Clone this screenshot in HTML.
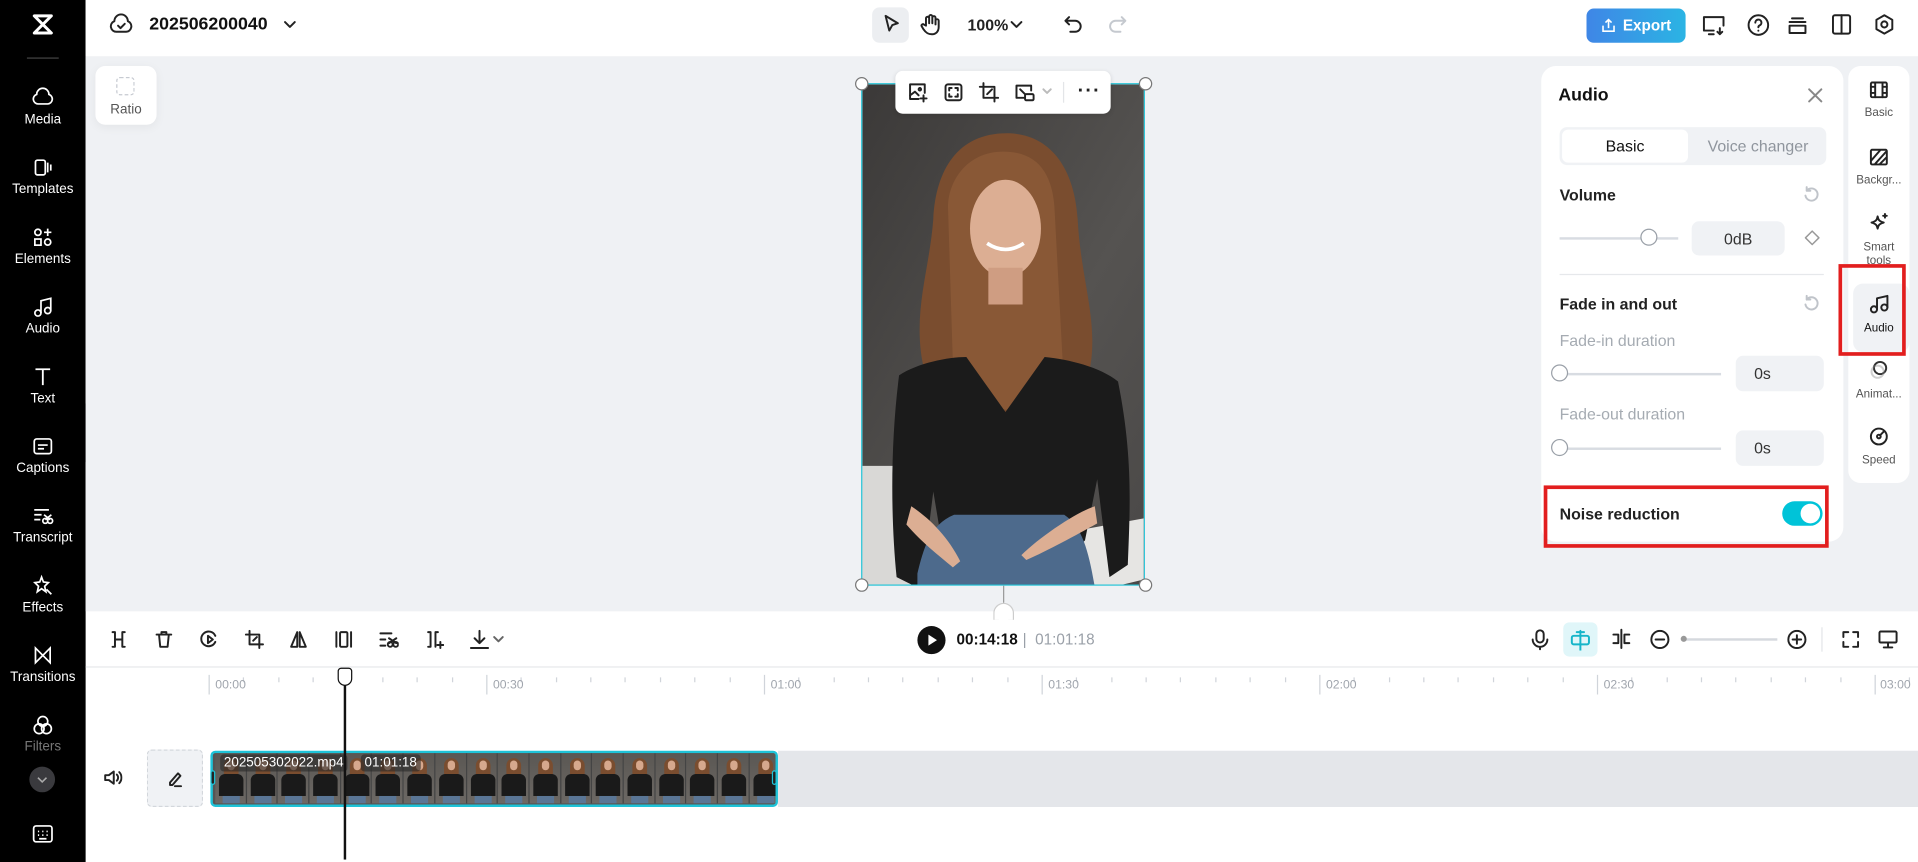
<!DOCTYPE html>
<html><head><meta charset="utf-8">
<style>
*{box-sizing:border-box;margin:0;padding:0}
html,body{width:1918px;height:862px;overflow:hidden;background:#fff;font-family:"Liberation Sans",sans-serif}
#s{position:absolute;left:0;top:0;width:1568px;height:705px;transform:scale(1.22321,1.2227);transform-origin:0 0;background:#fff}
.a{position:absolute}
.sb{left:0;top:0;width:70px;height:705px;background:#000}
.si{position:absolute;left:0;width:70px;text-align:center;color:#fff;font-size:11px}
.si svg{display:block;margin:0 auto 3px}
.top{left:70px;top:0;width:1498px;height:46px;background:#fff}
.canvas{left:70px;top:46px;width:1498px;height:454px;background:#eff1f4}
.ic{position:absolute;stroke:#222;fill:none;stroke-width:1.6;stroke-linecap:round;stroke-linejoin:round}
.lbl{font-size:13px;color:#222;font-weight:bold}
.gray{color:#9aa0a8}
.inp{position:absolute;background:#f0f2f5;border-radius:6px;font-size:13px;color:#333;display:flex;align-items:center;justify-content:center}
.sl{position:absolute;height:2px;background:#d8dce2}
.kn{position:absolute;width:14px;height:14px;border-radius:50%;background:#fff;border:1px solid #9aa0a8}
.rt{position:absolute;left:0;width:50px;text-align:center;font-size:9.5px;color:#555}
.rt svg{display:block;margin:0 auto 6px}
.rl{position:absolute;top:555px;font-size:10px;color:#a0a5ad}
.th{width:25.7px;height:41px;flex:none;position:relative;overflow:hidden;background:linear-gradient(#5a5753,#6c6864);border-right:1px solid #444}
</style></head><body>
<div id="s">
<!-- sidebar -->
<div class="a sb">
 <svg class="a" style="left:25px;top:10px" width="20" height="20" viewBox="0 0 20 20"><path d="M3 3h14L10 10 17 17H3L10 10Z" fill="none" stroke="#fff" stroke-width="2.4" stroke-linejoin="round"/></svg>
 <div class="a" style="left:22px;top:47px;width:26px;height:1px;background:#444"></div>
 <div class="si" style="top:71px"><svg width="18" height="18" viewBox="0 0 18 18"><path d="M5 14a4 4 0 0 1-1-7.8 5 5 0 0 1 10 0A4 4 0 0 1 13 14Z" fill="none" stroke="#fff" stroke-width="1.4"/></svg>Media</div>
 <div class="si" style="top:128px"><svg width="18" height="18" viewBox="0 0 18 18"><rect x="3" y="3" width="8" height="12" rx="1.5" fill="none" stroke="#fff" stroke-width="1.4"/><path d="M13 5v8M15.5 6.5v5" stroke="#fff" stroke-width="1.4"/></svg>Templates</div>
 <div class="si" style="top:185px"><svg width="18" height="18" viewBox="0 0 18 18" fill="none" stroke="#fff" stroke-width="1.4"><circle cx="5" cy="5" r="2.5"/><path d="M13 2v6M10 5h6"/><rect x="2.5" y="10.5" width="5" height="5"/><circle cx="13" cy="13" r="2.5"/></svg>Elements</div>
 <div class="si" style="top:242px"><svg width="18" height="18" viewBox="0 0 18 18" fill="none" stroke="#fff" stroke-width="1.4"><circle cx="5" cy="14" r="2.5"/><circle cx="13" cy="12" r="2.5"/><path d="M7.5 14V4l8-2v10"/></svg>Audio</div>
 <div class="si" style="top:299px"><svg width="18" height="18" viewBox="0 0 18 18" fill="none" stroke="#fff" stroke-width="1.5"><path d="M3 3h12M9 3v13"/></svg>Text</div>
 <div class="si" style="top:356px"><svg width="18" height="18" viewBox="0 0 18 18" fill="none" stroke="#fff" stroke-width="1.4"><rect x="2" y="3" width="14" height="12" rx="2"/><path d="M5 8h8M5 11h5"/></svg>Captions</div>
 <div class="si" style="top:413px"><svg width="18" height="18" viewBox="0 0 18 18" fill="none" stroke="#fff" stroke-width="1.4"><path d="M2 4h12M2 8h6M2 12h5"/><circle cx="11" cy="13" r="2"/><circle cx="15" cy="13" r="2"/><path d="M10 8l5 4M16 8l-5 4"/></svg>Transcript</div>
 <div class="si" style="top:470px"><svg width="18" height="18" viewBox="0 0 18 18" fill="none" stroke="#fff" stroke-width="1.4"><path d="M8 2l1.5 4 4 .5-3 3 1 4.5L8 11.5 4.5 14l1-4.5-3-3 4-.5Z"/><path d="M12 12l4 4"/></svg>Effects</div>
 <div class="si" style="top:527px"><svg width="18" height="18" viewBox="0 0 18 18" fill="none" stroke="#fff" stroke-width="1.4"><path d="M3 3v12l12-12v12Z"/></svg>Transitions</div>
 <div class="si" style="top:584px;color:#777"><svg width="18" height="18" viewBox="0 0 18 18" fill="none" stroke="#fff" stroke-width="1.4"><circle cx="9" cy="6" r="4"/><circle cx="6" cy="12" r="4"/><circle cx="12" cy="12" r="4"/></svg>Filters</div>
 <div class="a" style="left:24px;top:627px;width:21px;height:21px;border-radius:50%;background:#3a3a3e"><svg class="a" style="left:6px;top:7px" width="9" height="7" viewBox="0 0 9 7"><path d="M1 2l3.5 3.5L8 2" fill="none" stroke="#aaa" stroke-width="1.3"/></svg></div>
 <svg class="a" style="left:26px;top:674px" width="18" height="16" viewBox="0 0 18 16" fill="none" stroke="#fff" stroke-width="1.4"><rect x="1.5" y="1.5" width="15" height="13" rx="2"/><path d="M5 6h1M8.5 6h1M12 6h1M5 9h1M8.5 9h1M12 9h1M6 12h6"/></svg>
</div>
<div class="a" style="left:70px;top:330px;width:6px;height:48px;background:#2a2a2e;border-radius:0 6px 6px 0"></div>
<!-- top bar -->
<div class="a top"></div>
<svg class="ic" style="left:89px;top:11px" width="20" height="18" viewBox="0 0 20 18"><path d="M6 15a4.5 4.5 0 0 1-1.5-8.7 5.5 5.5 0 0 1 11 0A4.5 4.5 0 0 1 14 15Z"/><path d="M7.5 10l2 2 3.5-3.5"/></svg>
<div class="a" style="left:122px;top:12px;font-size:14.5px;font-weight:bold;color:#111">202506200040</div>
<svg class="ic" style="left:232px;top:16px" width="10" height="8" viewBox="0 0 10 8"><path d="M1 2l4 4 4-4"/></svg>
<div class="a" style="left:713px;top:6px;width:30px;height:29px;background:#eceef1;border-radius:6px"></div>
<svg class="ic" style="left:720px;top:11px" width="18" height="18" viewBox="0 0 18 18"><path d="M4 2l10 6-4.5 1.5L7 14Z"/></svg>
<svg class="ic" style="left:752px;top:10px" width="18" height="20" viewBox="0 0 18 20"><path d="M5 11V5a1.3 1.3 0 0 1 2.6 0v4V3.5a1.3 1.3 0 0 1 2.6 0V9V4.5a1.3 1.3 0 0 1 2.6 0V10V7a1.3 1.3 0 0 1 2.6 0v5c0 4-2.5 6-5.5 6S5 17 3 14l-1.5-2.5a1.2 1.2 0 0 1 2-1.3Z"/></svg>
<div class="a" style="left:791px;top:13px;font-size:13px;color:#222;font-weight:bold">100%</div>
<svg class="ic" style="left:826px;top:16px" width="10" height="8" viewBox="0 0 10 8"><path d="M1 2l4 4 4-4"/></svg>
<svg class="ic" style="left:869px;top:12px" width="17" height="16" viewBox="0 0 17 16"><path d="M5 2L2 5l3 3M2 5h8a4.5 4.5 0 0 1 0 9H6"/></svg>
<svg class="ic" style="left:905px;top:12px;stroke:#c5c9cf" width="17" height="16" viewBox="0 0 17 16"><path d="M12 2l3 3-3 3M15 5H7a4.5 4.5 0 0 0 0 9h4"/></svg>
<div class="a" style="left:1297px;top:7px;width:81px;height:28px;border-radius:6px;background:linear-gradient(90deg,#3f86e6,#2bb4e4);color:#fff;font-size:12.5px;font-weight:bold;display:flex;align-items:center;justify-content:center;gap:6px"><svg width="12" height="12" viewBox="0 0 12 12" fill="none" stroke="#fff" stroke-width="1.3"><path d="M6 8V1M3.5 3.5L6 1l2.5 2.5M1.5 6v4.5h9V6"/></svg>Export</div>
<svg class="ic" style="left:1391px;top:11px" width="20" height="19" viewBox="0 0 20 19"><path d="M10 14H2V3h16v7M6 17h4"/><path d="M15 12v5M13 15l2 2 2-2"/></svg>
<svg class="ic" style="left:1428px;top:11px" width="19" height="19" viewBox="0 0 19 19"><circle cx="9.5" cy="9.5" r="8"/><path d="M7 7.5a2.5 2.5 0 1 1 3.5 2.3c-.7.3-1 .8-1 1.5M9.5 14v.1"/></svg>
<svg class="ic" style="left:1461px;top:12px" width="17" height="17" viewBox="0 0 17 17"><path d="M4 3h9M2 6h13M2 9h13v6H2Z"/></svg>
<svg class="ic" style="left:1497px;top:11px" width="17" height="18" viewBox="0 0 17 18"><rect x="1.5" y="1.5" width="14" height="15" rx="1.5"/><path d="M8.5 1.5v15"/></svg>
<svg class="ic" style="left:1532px;top:11px" width="17" height="18" viewBox="0 0 17 18"><path d="M8.5 1.5l6.5 3.7v7.6L8.5 16.5 2 12.8V5.2Z"/><circle cx="8.5" cy="9" r="2.5"/></svg>
<!-- canvas -->
<div class="a canvas"></div>
<div class="a" style="left:78px;top:54px;width:50px;height:48px;background:#fff;border-radius:8px;box-shadow:0 2px 8px rgba(0,0,0,.05)"><div class="a" style="left:17px;top:9px;width:15px;height:15px;border:1.5px dashed #c6cad1;border-radius:3px"></div><div class="a" style="left:0;top:30px;width:50px;text-align:center;font-size:11px;color:#555">Ratio</div></div>
<!-- video -->
<div class="a" style="left:704px;top:68px;width:232px;height:411px;border:1.5px solid #22c3d6;overflow:hidden">
<svg width="232" height="411" viewBox="0 0 232 411" style="display:block">
<defs><linearGradient id="bg" x1="0" y1="0" x2="1" y2="1"><stop offset="0" stop-color="#3b3938"/><stop offset=".6" stop-color="#555351"/><stop offset="1" stop-color="#4a4847"/></linearGradient></defs>
<rect width="232" height="411" fill="url(#bg)"/>
<path d="M0 312h40v99H0Z" fill="#d9d8d6"/><path d="M175 365l55-10v50l-25 6h-30Z" fill="#e6e5e3"/>
<path d="M118 40c-40 0-58 30-60 70-3 40-15 70-10 110 5 40 30 50 40 60h70c15-20 30-30 30-70 0-30-10-60-12-100-3-45-25-70-58-70Z" fill="#7a4d2f"/>
<path d="M70 100c0-20 15-45 45-45s40 20 42 45l8 150-20 20-70-10Z" fill="#93603c" opacity=".6"/>
<ellipse cx="117" cy="118" rx="29" ry="40" fill="#dcae93"/>
<path d="M103 150h28v30h-28Z" fill="#cf9d82"/>
<path d="M30 238c15-10 40-15 55-15l32 45 32-45c20 2 45 8 60 20 12 60 10 100 8 150l-15 10-10-80-10 50-20 20H68l-10-60-10 80-20-10c-5-50-5-110 2-165Z" fill="#1b1b1b"/>
<path d="M45 400c5-20 10-40 30-48h90c15 10 20 30 25 59H45Z" fill="#4d6a8c"/>
<path d="M40 345c15 10 30 25 40 45l-6 5c-12-10-25-20-38-35Z" fill="#dcae93"/>
<path d="M190 345c-15 5-45 25-60 40l4 4c18-8 40-20 58-30Z" fill="#dcae93"/>
<path d="M102 130q15 10 30 0" stroke="#fff" stroke-width="3" fill="none"/>
</svg></div>
<div class="a" style="left:699px;top:63px;width:11px;height:11px;border-radius:50%;background:#fff;border:1px solid #777"></div>
<div class="a" style="left:931px;top:63px;width:11px;height:11px;border-radius:50%;background:#fff;border:1px solid #777"></div>
<div class="a" style="left:699px;top:473px;width:11px;height:11px;border-radius:50%;background:#fff;border:1px solid #777"></div>
<div class="a" style="left:931px;top:473px;width:11px;height:11px;border-radius:50%;background:#fff;border:1px solid #777"></div>
<div class="a" style="left:820px;top:479px;width:1px;height:14px;background:#999"></div>
<div class="a" style="left:812px;top:493px;width:17px;height:14px;border-radius:9px 9px 0 0;background:#fff;border:1px solid #ccc;border-bottom:none"></div>
<!-- floating toolbar -->
<div class="a" style="left:732px;top:58px;width:176px;height:35px;background:#fff;border-radius:6px;box-shadow:0 1px 4px rgba(0,0,0,.12)">
<svg class="ic" style="left:10px;top:9px" width="17" height="17" viewBox="0 0 17 17"><path d="M9 14H2V2h12v7"/><path d="M2 11l4-3 3 3M13 11v5M10.5 13.5h5"/><circle cx="10" cy="6" r="1"/></svg>
<svg class="ic" style="left:39px;top:9px" width="17" height="17" viewBox="0 0 17 17"><rect x="2" y="2" width="13" height="13" rx="2"/><path d="M5 7V5h2M10 5h2v2M12 10v2h-2M7 12H5v-2"/></svg>
<svg class="ic" style="left:68px;top:9px" width="17" height="17" viewBox="0 0 17 17"><path d="M4 1v12h12M1 4h12v12M7 10l4-4"/></svg>
<svg class="ic" style="left:97px;top:9px" width="17" height="17" viewBox="0 0 17 17"><path d="M8 13H2V3h12v4"/><rect x="9" y="10" width="7" height="5" rx="1"/><path d="M5 6l4 4"/></svg>
<svg class="ic" style="left:120px;top:14px;stroke:#bbb" width="8" height="6" viewBox="0 0 8 6"><path d="M1 1l3 3 3-3"/></svg>
<div class="a" style="left:137px;top:9px;width:1px;height:17px;background:#e3e5e8"></div>
<div class="a" style="left:149px;top:8px;font-size:16px;font-weight:bold;color:#222;letter-spacing:1px">···</div>
</div>
<!-- audio panel -->
<div class="a" style="left:1260px;top:54px;width:247px;height:389px;background:#fff;border-radius:12px"></div>
<div class="a" style="left:1274px;top:70px;font-size:14.5px;font-weight:bold;color:#111">Audio</div>
<svg class="ic" style="left:1477px;top:71px;stroke:#888" width="14" height="14" viewBox="0 0 14 14"><path d="M2 2l10 10M12 2L2 12"/></svg>
<div class="a" style="left:1275px;top:104px;width:218px;height:31px;background:#f0f2f5;border-radius:6px"></div>
<div class="a" style="left:1277px;top:106px;width:103px;height:27px;background:#fff;border-radius:5px;font-size:13px;color:#111;display:flex;align-items:center;justify-content:center">Basic</div>
<div class="a gray" style="left:1396px;top:112px;font-size:13px;color:#8f959d">Voice changer</div>
<div class="a lbl" style="left:1275px;top:152px">Volume</div>
<svg class="ic" style="left:1474px;top:152px;stroke:#c0c4ca" width="14" height="14" viewBox="0 0 14 14"><path d="M3 4a5 5 0 1 1-1 4M3 1v3h3"/></svg>
<div class="sl" style="left:1275px;top:194px;width:97px"></div>
<div class="kn" style="left:1341px;top:187px"></div>
<div class="inp" style="left:1383px;top:181px;width:76px;height:28px">0dB</div>
<svg class="ic" style="left:1475px;top:188px;stroke:#999;stroke-width:1.2" width="13" height="13" viewBox="0 0 13 13"><path d="M6.5 1l5.5 5.5-5.5 5.5L1 6.5Z"/></svg>
<div class="a" style="left:1275px;top:224px;width:216px;height:1px;background:#e6e8eb"></div>
<div class="a lbl" style="left:1275px;top:241px">Fade in and out</div>
<svg class="ic" style="left:1474px;top:241px;stroke:#c0c4ca" width="14" height="14" viewBox="0 0 14 14"><path d="M3 4a5 5 0 1 1-1 4M3 1v3h3"/></svg>
<div class="a" style="left:1275px;top:271px;font-size:13px;color:#a5abb2">Fade-in duration</div>
<div class="sl" style="left:1275px;top:305px;width:132px"></div>
<div class="kn" style="left:1268px;top:298px"></div>
<div class="inp" style="left:1419px;top:291px;width:72px;height:29px;justify-content:flex-start;padding-left:15px">0s</div>
<div class="a" style="left:1275px;top:331px;font-size:13px;color:#a5abb2">Fade-out duration</div>
<div class="sl" style="left:1275px;top:366px;width:132px"></div>
<div class="kn" style="left:1268px;top:359px"></div>
<div class="inp" style="left:1419px;top:352px;width:72px;height:29px;justify-content:flex-start;padding-left:15px">0s</div>
<div class="a" style="left:1262px;top:397px;width:233px;height:51px;border:3px solid #e21e1e"></div>
<div class="a lbl" style="left:1275px;top:413px">Noise reduction</div>
<div class="a" style="left:1457px;top:410px;width:33px;height:20px;border-radius:10px;background:#00c3d8"><div class="a" style="left:15px;top:2px;width:16px;height:16px;border-radius:50%;background:#fff"></div></div>
<!-- right tabs -->
<div class="a" style="left:1511px;top:54px;width:50px;height:341px;background:#fff;border-radius:10px">
 <div class="rt" style="top:12px"><svg class="ic" style="position:static" width="16" height="15" viewBox="0 0 16 15"><rect x="1.5" y="1.5" width="13" height="12" rx="1"/><path d="M5 1.5v12M11 1.5v12M1.5 5h3.5M1.5 10h3.5M11 5h3.5M11 10h3.5"/></svg>Basic</div>
 <div class="rt" style="top:67px"><svg class="ic" style="position:static" width="16" height="15" viewBox="0 0 16 15"><rect x="1.5" y="1.5" width="13" height="12" rx="1"/><path d="M2 10l7-8M5 13l9-10M9 13l5-5"/></svg>Backgr...</div>
 <div class="rt" style="top:120px;line-height:11px"><svg class="ic" style="position:static" width="17" height="17" viewBox="0 0 17 17"><path d="M7 3c.5 3 1.5 4 5 5-3.5 1-4.5 2-5 5-.5-3-1.5-4-5-5 3.5-1 4.5-2 5-5ZM13 1v3M11.5 2.5h3"/></svg>Smart<br>tools</div>
 <div class="a" style="left:4px;top:178px;width:46px;height:56px;background:#f0f2f5;border-radius:8px"></div>
 <div class="rt" style="top:186px;color:#111"><svg class="ic" style="position:static" width="17" height="17" viewBox="0 0 17 17"><circle cx="4" cy="13" r="2.5"/><circle cx="12.5" cy="11.5" r="2.5"/><path d="M6.5 13V4l8.5-2v9.5"/></svg>Audio</div>
 <div class="rt" style="top:241px"><svg class="ic" style="position:static;stroke:#888" width="16" height="16" viewBox="0 0 16 16"><circle cx="9" cy="6" r="5" stroke="#333"/><circle cx="7" cy="9" r="5" opacity=".4"/></svg>Animat...</div>
 <div class="rt" style="top:295px"><svg class="ic" style="position:static" width="16" height="16" viewBox="0 0 16 16"><circle cx="8" cy="8" r="6.5"/><circle cx="8" cy="8" r="1.5"/><path d="M9 7l3-3"/></svg>Speed</div>
</div>
<div class="a" style="left:1503px;top:216px;width:55px;height:75px;border:3px solid #e21e1e"></div>
<!-- timeline toolbar -->
<svg class="ic" style="left:89px;top:515px" width="16" height="16" viewBox="0 0 16 16"><path d="M3 2h2v12H3M13 2h-2v12h2M5 8h6"/></svg>
<svg class="ic" style="left:126px;top:515px" width="16" height="16" viewBox="0 0 16 16"><path d="M2 4h12M6 4V2h4v2M4 4l1 10h6l1-10"/></svg>
<svg class="ic" style="left:163px;top:515px" width="16" height="16" viewBox="0 0 16 16"><path d="M13 10A6 6 0 1 1 13 5"/><path d="M7 5l4 3-4 3Z"/></svg>
<svg class="ic" style="left:200px;top:515px" width="16" height="16" viewBox="0 0 16 16"><path d="M4 1v11h11M1 4h11v11M7 9l3-3"/></svg>
<svg class="ic" style="left:236px;top:515px" width="16" height="16" viewBox="0 0 16 16"><path d="M7 2v12H2ZM9 2v12h5Z"/></svg>
<svg class="ic" style="left:273px;top:515px" width="16" height="16" viewBox="0 0 16 16"><path d="M2 2v12M14 2v12"/><rect x="5" y="2" width="6" height="12" rx="1"/></svg>
<svg class="ic" style="left:310px;top:515px" width="16" height="16" viewBox="0 0 16 16"><path d="M1 3h9M1 8h4M1 13h4"/><circle cx="9" cy="12" r="2"/><circle cx="13.5" cy="12" r="2"/><path d="M8 7l6 4M14 7l-6 4"/></svg>
<svg class="ic" style="left:347px;top:515px" width="16" height="16" viewBox="0 0 16 16"><path d="M3 2h2v12H3M11 2h-2v12"/><path d="M13 10v5M10.5 12.5h5"/></svg>
<svg class="ic" style="left:383px;top:514px" width="18" height="18" viewBox="0 0 18 18"><path d="M9 2v10M5 8l4 4 4-4M2 16h14"/></svg>
<svg class="ic" style="left:403px;top:520px;stroke:#666" width="9" height="6" viewBox="0 0 9 6"><path d="M1 1l3.5 3.5L8 1"/></svg>
<div class="a" style="left:750px;top:512px;width:23px;height:23px;border-radius:50%;background:#111"><svg class="a" style="left:8px;top:6px" width="9" height="11" viewBox="0 0 9 11"><path d="M1 1l7 4.5-7 4.5Z" fill="#fff"/></svg></div>
<div class="a" style="left:782px;top:516px;font-size:12.5px;font-weight:bold;color:#111">00:14:18</div>
<div class="a" style="left:836px;top:516px;font-size:12.5px;color:#9aa0a8">| &nbsp;01:01:18</div>
<svg class="ic" style="left:1251px;top:514px" width="16" height="18" viewBox="0 0 16 18"><rect x="5" y="1.5" width="6" height="10" rx="3"/><path d="M2 9a6 6 0 0 0 12 0M8 15v2"/></svg>
<div class="a" style="left:1278px;top:509px;width:28px;height:28px;background:#e0f6f9;border-radius:5px"></div>
<svg class="ic" style="left:1283px;top:514px;stroke:#15b5c9" width="18" height="18" viewBox="0 0 18 18"><rect x="2" y="6" width="14" height="7" rx="1.5"/><path d="M9 2v16M6 3h6"/></svg>
<svg class="ic" style="left:1317px;top:514px" width="17" height="17" viewBox="0 0 17 17"><path d="M8.5 1v15M2 5h4v7H2M15 5h-4v7h4"/></svg>
<svg class="ic" style="left:1349px;top:515px" width="16" height="16" viewBox="0 0 16 16"><circle cx="8" cy="8" r="7"/><path d="M4.5 8h7"/></svg>
<div class="a" style="left:1375px;top:522px;width:78px;height:2px;background:#d5d9de"></div>
<div class="a" style="left:1374px;top:520px;width:5px;height:5px;border-radius:50%;background:#999"></div>
<svg class="ic" style="left:1461px;top:515px" width="16" height="16" viewBox="0 0 16 16"><circle cx="8" cy="8" r="7"/><path d="M4.5 8h7M8 4.5v7"/></svg>
<div class="a" style="left:1489px;top:513px;width:1px;height:20px;background:#e3e5e8"></div>
<svg class="ic" style="left:1505px;top:515px" width="16" height="16" viewBox="0 0 16 16"><path d="M2 6V2h4M10 2h4v4M14 10v4h-4M6 14H2v-4"/></svg>
<svg class="ic" style="left:1535px;top:515px" width="17" height="16" viewBox="0 0 17 16"><rect x="1.5" y="1.5" width="14" height="9" rx="1"/><path d="M8.5 10.5v4M5 14.5h7"/></svg>
<div class="a" style="left:70px;top:545px;width:1498px;height:1px;background:#e6e8eb"></div>
<!-- ruler -->
<svg class="a" style="left:70px;top:546px" width="1498" height="24"><g stroke="#d0d4da" stroke-width="1">
<path d="M101 6v16M328 6v16M555 6v16M782 6v16M1009 6v16M1236 6v16M1463 6v16"/>
<path d="M129 8v4M158 8v4M186 8v4M215 8v4M243 8v4M271 8v4M300 8v4M356 8v4M385 8v4M413 8v4M441 8v4M470 8v4M498 8v4M527 8v4M583 8v4M612 8v4M640 8v4M668 8v4M697 8v4M725 8v4M754 8v4M810 8v4M839 8v4M867 8v4M895 8v4M924 8v4M952 8v4M981 8v4M1037 8v4M1066 8v4M1094 8v4M1122 8v4M1151 8v4M1179 8v4M1208 8v4M1264 8v4M1293 8v4M1321 8v4M1349 8v4M1378 8v4M1406 8v4M1435 8v4M1491 8v4"/></g></svg>
<div class="rl" style="left:176px">00:00</div><div class="rl" style="left:403px">00:30</div><div class="rl" style="left:630px">01:00</div><div class="rl" style="left:857px">01:30</div><div class="rl" style="left:1084px">02:00</div><div class="rl" style="left:1311px">02:30</div><div class="rl" style="left:1537px">03:00</div>
<!-- track -->
<svg class="ic" style="left:84px;top:628px" width="16" height="16" viewBox="0 0 16 16"><path d="M2 6h3l4-3v10l-4-3H2Z"/><path d="M11.5 5.5a3.5 3.5 0 0 1 0 5M13.5 3.5a6.5 6.5 0 0 1 0 9"/></svg>
<div class="a" style="left:120px;top:613px;width:46px;height:47px;background:#f0f2f5;border:1px dashed #d3d7dc;border-radius:4px"><svg class="ic" style="left:15px;top:16px" width="14" height="14" viewBox="0 0 14 14"><path d="M3 10l6.5-7.5 2 2L5 12H3ZM7 13h5"/></svg></div>
<div class="a" style="left:636px;top:614px;width:932px;height:46px;background:#e4e6ea"></div>
<div class="a" style="left:172px;top:614px;width:464px;height:46px;border:2px solid #1ec3d8;border-radius:4px;overflow:hidden;background:#555;display:flex;padding-left:2px">
<div class="th"><div class="a" style="left:7px;top:4px;width:12px;height:18px;border-radius:6px;background:#7a4d2f"></div><div class="a" style="left:10px;top:6px;width:6px;height:8px;border-radius:3px;background:#d6a88d"></div><div class="a" style="left:3px;top:17px;width:20px;height:18px;border-radius:5px 5px 0 0;background:#1a1a1a"></div><div class="a" style="left:6px;top:35px;width:14px;height:6px;background:#5a7696"></div></div>
<div class="th"><div class="a" style="left:7px;top:4px;width:12px;height:18px;border-radius:6px;background:#7a4d2f"></div><div class="a" style="left:10px;top:6px;width:6px;height:8px;border-radius:3px;background:#d6a88d"></div><div class="a" style="left:3px;top:17px;width:20px;height:18px;border-radius:5px 5px 0 0;background:#1a1a1a"></div><div class="a" style="left:6px;top:35px;width:14px;height:6px;background:#5a7696"></div></div>
<div class="th"><div class="a" style="left:7px;top:4px;width:12px;height:18px;border-radius:6px;background:#7a4d2f"></div><div class="a" style="left:10px;top:6px;width:6px;height:8px;border-radius:3px;background:#d6a88d"></div><div class="a" style="left:3px;top:17px;width:20px;height:18px;border-radius:5px 5px 0 0;background:#1a1a1a"></div><div class="a" style="left:6px;top:35px;width:14px;height:6px;background:#5a7696"></div></div>
<div class="th"><div class="a" style="left:7px;top:4px;width:12px;height:18px;border-radius:6px;background:#7a4d2f"></div><div class="a" style="left:10px;top:6px;width:6px;height:8px;border-radius:3px;background:#d6a88d"></div><div class="a" style="left:3px;top:17px;width:20px;height:18px;border-radius:5px 5px 0 0;background:#1a1a1a"></div><div class="a" style="left:6px;top:35px;width:14px;height:6px;background:#5a7696"></div></div>
<div class="th"><div class="a" style="left:7px;top:4px;width:12px;height:18px;border-radius:6px;background:#7a4d2f"></div><div class="a" style="left:10px;top:6px;width:6px;height:8px;border-radius:3px;background:#d6a88d"></div><div class="a" style="left:3px;top:17px;width:20px;height:18px;border-radius:5px 5px 0 0;background:#1a1a1a"></div><div class="a" style="left:6px;top:35px;width:14px;height:6px;background:#5a7696"></div></div>
<div class="th"><div class="a" style="left:7px;top:4px;width:12px;height:18px;border-radius:6px;background:#7a4d2f"></div><div class="a" style="left:10px;top:6px;width:6px;height:8px;border-radius:3px;background:#d6a88d"></div><div class="a" style="left:3px;top:17px;width:20px;height:18px;border-radius:5px 5px 0 0;background:#1a1a1a"></div><div class="a" style="left:6px;top:35px;width:14px;height:6px;background:#5a7696"></div></div>
<div class="th"><div class="a" style="left:7px;top:4px;width:12px;height:18px;border-radius:6px;background:#7a4d2f"></div><div class="a" style="left:10px;top:6px;width:6px;height:8px;border-radius:3px;background:#d6a88d"></div><div class="a" style="left:3px;top:17px;width:20px;height:18px;border-radius:5px 5px 0 0;background:#1a1a1a"></div><div class="a" style="left:6px;top:35px;width:14px;height:6px;background:#5a7696"></div></div>
<div class="th"><div class="a" style="left:7px;top:4px;width:12px;height:18px;border-radius:6px;background:#7a4d2f"></div><div class="a" style="left:10px;top:6px;width:6px;height:8px;border-radius:3px;background:#d6a88d"></div><div class="a" style="left:3px;top:17px;width:20px;height:18px;border-radius:5px 5px 0 0;background:#1a1a1a"></div><div class="a" style="left:6px;top:35px;width:14px;height:6px;background:#5a7696"></div></div>
<div class="th"><div class="a" style="left:7px;top:4px;width:12px;height:18px;border-radius:6px;background:#7a4d2f"></div><div class="a" style="left:10px;top:6px;width:6px;height:8px;border-radius:3px;background:#d6a88d"></div><div class="a" style="left:3px;top:17px;width:20px;height:18px;border-radius:5px 5px 0 0;background:#1a1a1a"></div><div class="a" style="left:6px;top:35px;width:14px;height:6px;background:#5a7696"></div></div>
<div class="th"><div class="a" style="left:7px;top:4px;width:12px;height:18px;border-radius:6px;background:#7a4d2f"></div><div class="a" style="left:10px;top:6px;width:6px;height:8px;border-radius:3px;background:#d6a88d"></div><div class="a" style="left:3px;top:17px;width:20px;height:18px;border-radius:5px 5px 0 0;background:#1a1a1a"></div><div class="a" style="left:6px;top:35px;width:14px;height:6px;background:#5a7696"></div></div>
<div class="th"><div class="a" style="left:7px;top:4px;width:12px;height:18px;border-radius:6px;background:#7a4d2f"></div><div class="a" style="left:10px;top:6px;width:6px;height:8px;border-radius:3px;background:#d6a88d"></div><div class="a" style="left:3px;top:17px;width:20px;height:18px;border-radius:5px 5px 0 0;background:#1a1a1a"></div><div class="a" style="left:6px;top:35px;width:14px;height:6px;background:#5a7696"></div></div>
<div class="th"><div class="a" style="left:7px;top:4px;width:12px;height:18px;border-radius:6px;background:#7a4d2f"></div><div class="a" style="left:10px;top:6px;width:6px;height:8px;border-radius:3px;background:#d6a88d"></div><div class="a" style="left:3px;top:17px;width:20px;height:18px;border-radius:5px 5px 0 0;background:#1a1a1a"></div><div class="a" style="left:6px;top:35px;width:14px;height:6px;background:#5a7696"></div></div>
<div class="th"><div class="a" style="left:7px;top:4px;width:12px;height:18px;border-radius:6px;background:#7a4d2f"></div><div class="a" style="left:10px;top:6px;width:6px;height:8px;border-radius:3px;background:#d6a88d"></div><div class="a" style="left:3px;top:17px;width:20px;height:18px;border-radius:5px 5px 0 0;background:#1a1a1a"></div><div class="a" style="left:6px;top:35px;width:14px;height:6px;background:#5a7696"></div></div>
<div class="th"><div class="a" style="left:7px;top:4px;width:12px;height:18px;border-radius:6px;background:#7a4d2f"></div><div class="a" style="left:10px;top:6px;width:6px;height:8px;border-radius:3px;background:#d6a88d"></div><div class="a" style="left:3px;top:17px;width:20px;height:18px;border-radius:5px 5px 0 0;background:#1a1a1a"></div><div class="a" style="left:6px;top:35px;width:14px;height:6px;background:#5a7696"></div></div>
<div class="th"><div class="a" style="left:7px;top:4px;width:12px;height:18px;border-radius:6px;background:#7a4d2f"></div><div class="a" style="left:10px;top:6px;width:6px;height:8px;border-radius:3px;background:#d6a88d"></div><div class="a" style="left:3px;top:17px;width:20px;height:18px;border-radius:5px 5px 0 0;background:#1a1a1a"></div><div class="a" style="left:6px;top:35px;width:14px;height:6px;background:#5a7696"></div></div>
<div class="th"><div class="a" style="left:7px;top:4px;width:12px;height:18px;border-radius:6px;background:#7a4d2f"></div><div class="a" style="left:10px;top:6px;width:6px;height:8px;border-radius:3px;background:#d6a88d"></div><div class="a" style="left:3px;top:17px;width:20px;height:18px;border-radius:5px 5px 0 0;background:#1a1a1a"></div><div class="a" style="left:6px;top:35px;width:14px;height:6px;background:#5a7696"></div></div>
<div class="th"><div class="a" style="left:7px;top:4px;width:12px;height:18px;border-radius:6px;background:#7a4d2f"></div><div class="a" style="left:10px;top:6px;width:6px;height:8px;border-radius:3px;background:#d6a88d"></div><div class="a" style="left:3px;top:17px;width:20px;height:18px;border-radius:5px 5px 0 0;background:#1a1a1a"></div><div class="a" style="left:6px;top:35px;width:14px;height:6px;background:#5a7696"></div></div>
<div class="th"><div class="a" style="left:7px;top:4px;width:12px;height:18px;border-radius:6px;background:#7a4d2f"></div><div class="a" style="left:10px;top:6px;width:6px;height:8px;border-radius:3px;background:#d6a88d"></div><div class="a" style="left:3px;top:17px;width:20px;height:18px;border-radius:5px 5px 0 0;background:#1a1a1a"></div><div class="a" style="left:6px;top:35px;width:14px;height:6px;background:#5a7696"></div></div>
</div>
<div class="a" style="left:180px;top:617px;padding:1px 3px;background:rgba(40,40,40,.6);border-radius:3px;font-size:11px;color:#fff">202505302022.mp4</div>
<div class="a" style="left:295px;top:617px;padding:1px 3px;background:rgba(40,40,40,.6);border-radius:3px;font-size:11px;color:#fff">01:01:18</div>
<div class="a" style="left:172px;top:630px;width:4px;height:12px;border:1px solid #1ec3d8;background:#222;border-radius:2px"></div>
<div class="a" style="left:631px;top:630px;width:4px;height:12px;border:1px solid #1ec3d8;background:#222;border-radius:2px"></div>
<!-- playhead -->
<div class="a" style="left:281px;top:558px;width:2px;height:145px;background:#111"></div>
<div class="a" style="left:276px;top:546px;width:12px;height:15px;background:#fff;border:1.5px solid #111;border-radius:3px 3px 6px 6px"></div>
</div>
</body></html>
